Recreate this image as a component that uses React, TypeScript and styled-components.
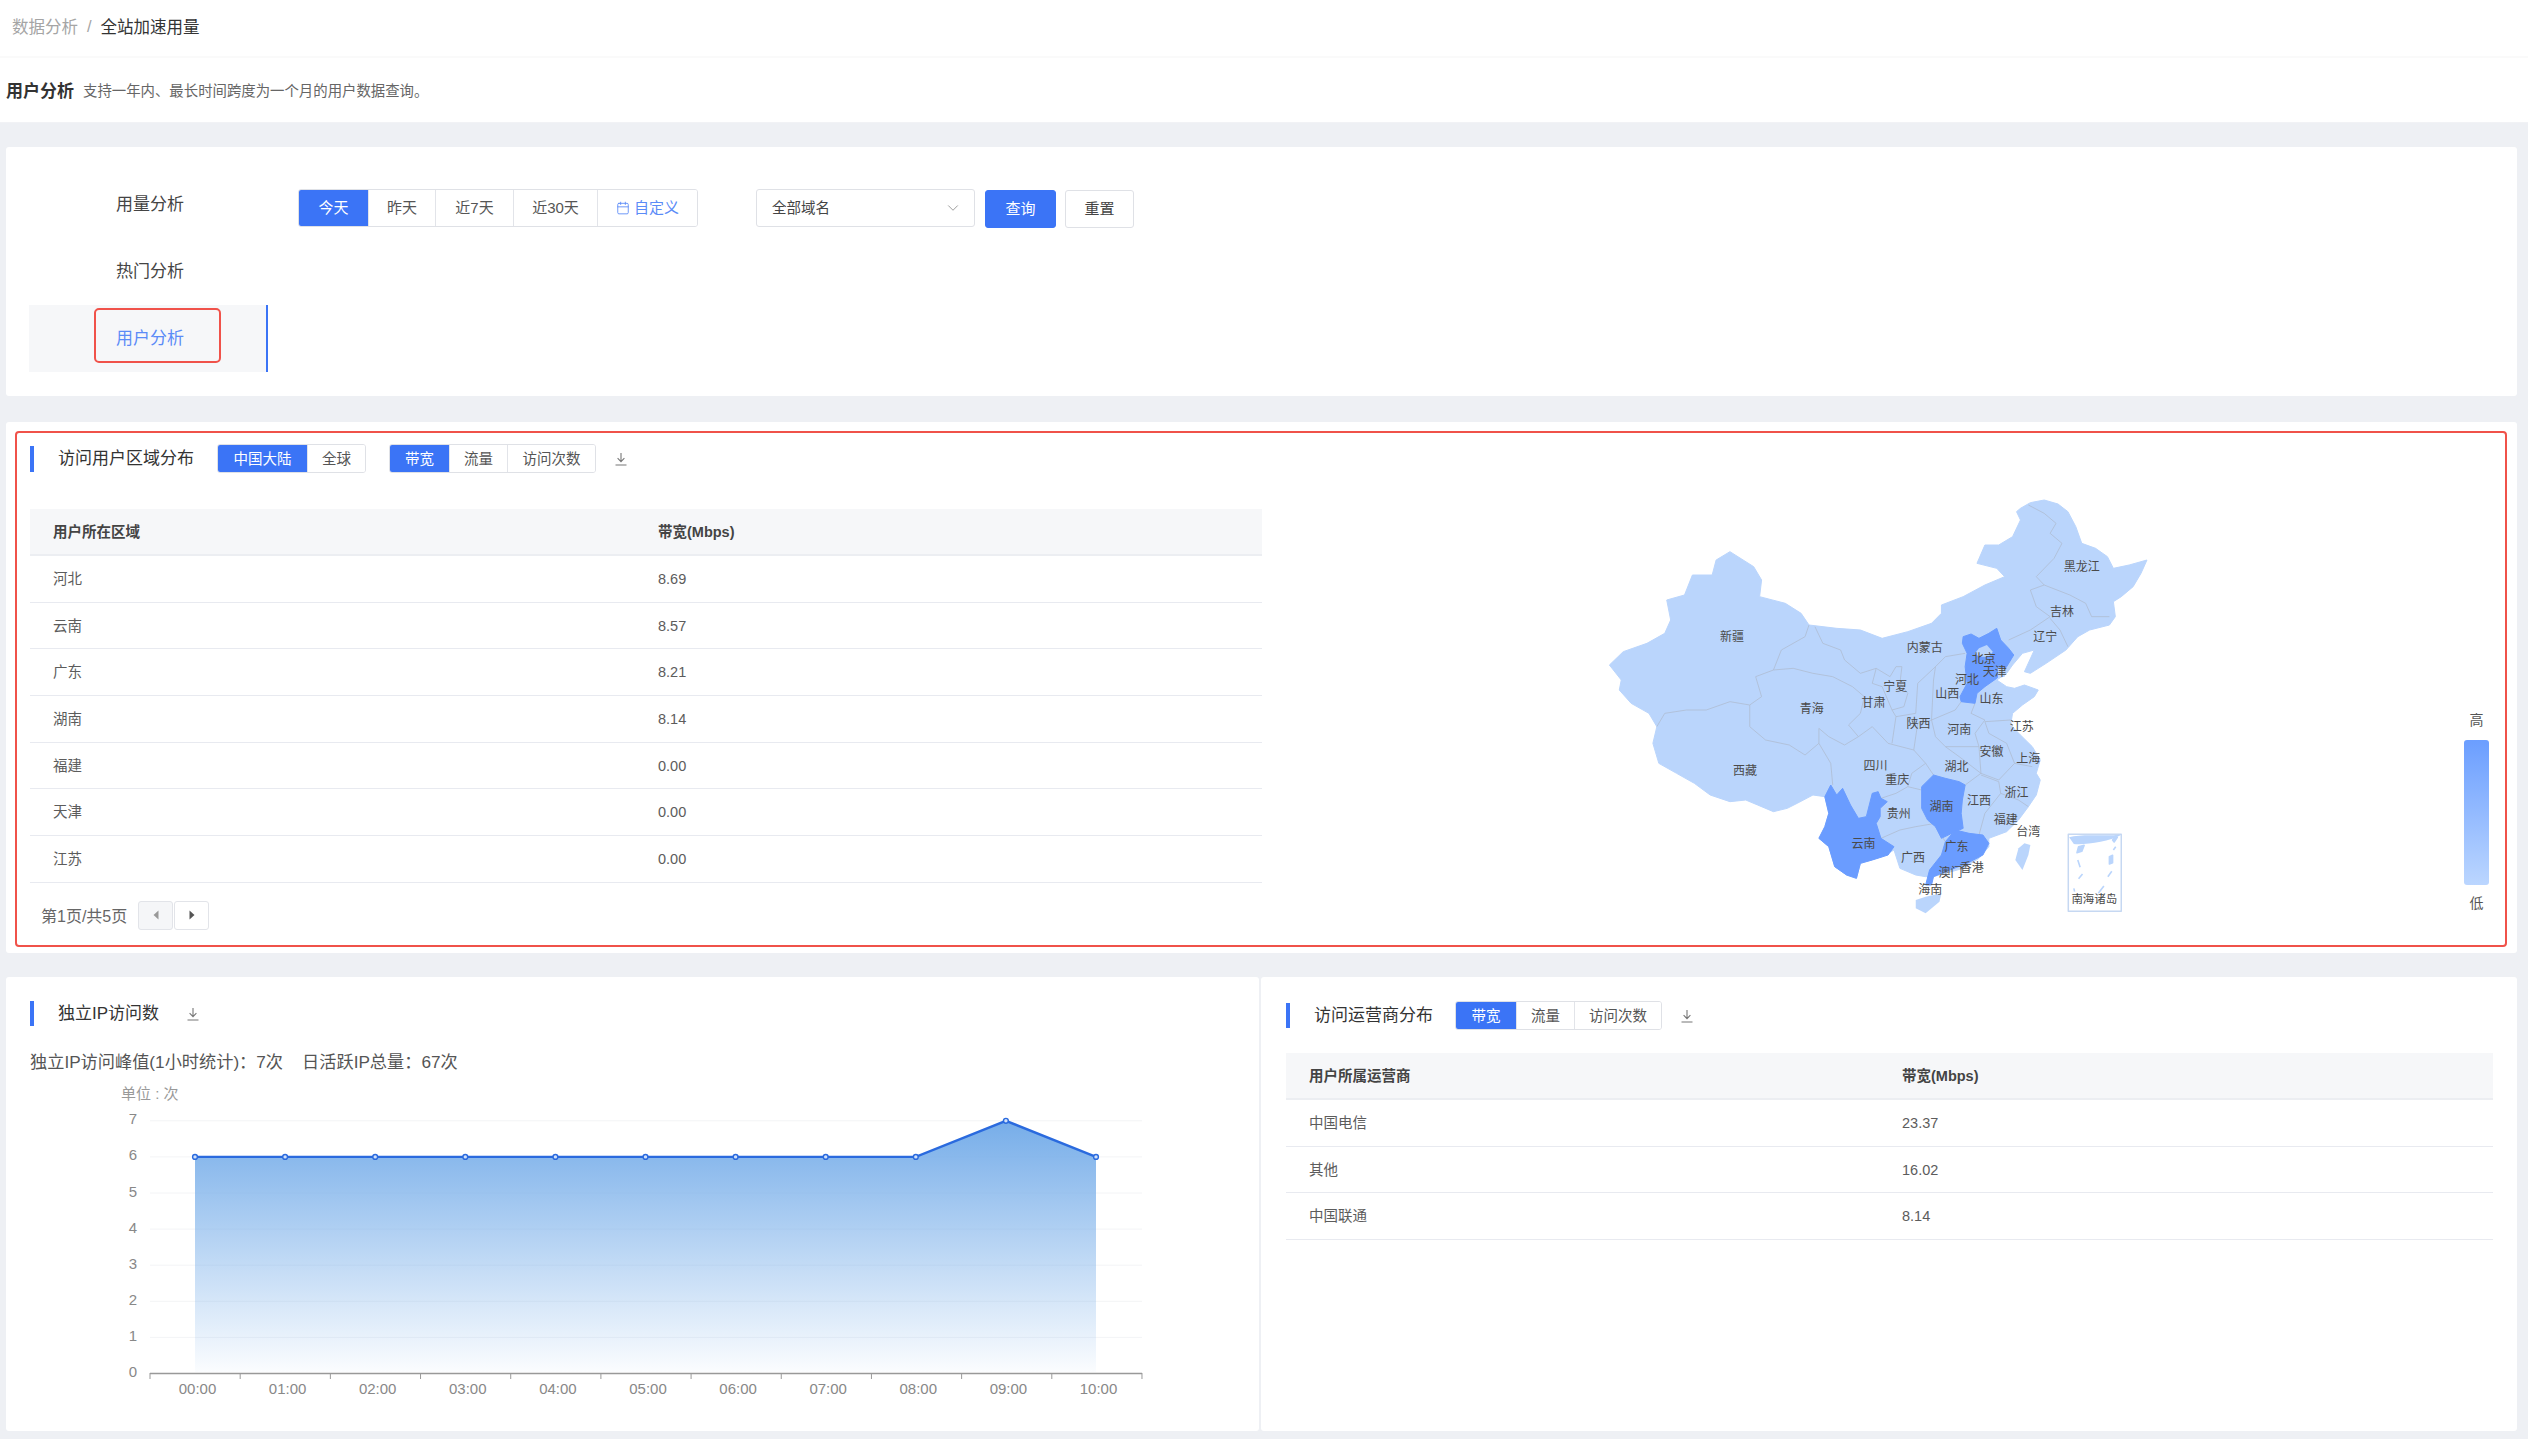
import React from "react";
import styled, { createGlobalStyle } from "styled-components";
import { Calendar, ChevronDown } from "lucide-react";

const Global = createGlobalStyle`
  html, body { margin: 0; padding: 0; background: #eef0f4; }
  body { font-family: "Liberation Sans", "Noto Sans CJK SC", sans-serif; color: #333; }
  * { box-sizing: border-box; }
`;

const BLUE = "#3b74f6";

const Page = styled.div`
  width: 2528px;
  height: 1439px;
  overflow: hidden;
  display: flex;
  flex-direction: column;
`;
const Breadcrumb = styled.div`
  height: 58px;
  padding: 0 0 4px 12px;
  background: #fff;
  display: flex;
  align-items: center;
  gap: 9px;
  font-size: 16.5px;
  border-bottom: 2px solid #fafafa;
`;
const Crumb = styled.span<{ $current?: boolean }>`
  color: ${(p) => (p.$current ? "#333" : "#a5a5a5")};
`;
const PageHeader = styled.div`
  height: 65px;
  background: #fff;
  padding: 0 0 1px 6px;
  display: flex;
  align-items: center;
  border-bottom: 1px solid #f1f2f5;
`;
const PageTitle = styled.span`
  font-size: 17px;
  font-weight: 700;
  color: #333;
  margin-right: 9px;
`;
const PageSub = styled.span`
  font-size: 14.4px;
  color: #666;
`;
const Main = styled.div`
  flex: 1;
  padding: 24px 11px 8px 6px;
  display: flex;
  flex-direction: column;
  gap: 25px;
`;
const Card = styled.div`
  background: #fff;
  border-radius: 3px;
`;
const TopCard = styled(Card)`
  height: 249px;
  margin-bottom: 1px;
  padding: 0 0 0 23px;
  display: flex;
`;
const Nav = styled.div`
  width: 239px;
  padding-top: 23.5px;
  display: flex;
  flex-direction: column;
`;
const NavItem = styled.div<{ $active?: boolean }>`
  position: relative;
  height: 67px;
  padding: 2px 0 0 87px;
  display: flex;
  align-items: center;
  line-height: 20px;
  font-size: 17px;
  color: ${(p) => (p.$active ? "#5b8bf7" : "#444")};
  background: ${(p) => (p.$active ? "#f6f7f9" : "transparent")};
  border-right: 2px solid ${(p) => (p.$active ? BLUE : "transparent")};
`;
const NavHighlight = styled.div`
  position: absolute;
  left: 65px;
  top: 3px;
  width: 127px;
  height: 55px;
  border: 2px solid #f0524a;
  border-radius: 5px;
`;
const Toolbar = styled.div`
  margin: 42px 0 0 30px;
  display: flex;
  align-items: flex-start;
`;
const Segmented = styled.div<{ $h: number }>`
  display: flex;
  height: ${(p) => p.$h}px;
  border: 1px solid #dfe1e6;
  border-radius: 3px;
  overflow: hidden;
  flex: none;
`;
const Segment = styled.div<{ $w: number; $on?: boolean; $link?: boolean; $size: number }>`
  width: ${(p) => p.$w}px;
  display: flex;
  align-items: center;
  justify-content: center;
  gap: 4px;
  line-height: 20px;
  font-size: ${(p) => p.$size}px;
  background: ${(p) => (p.$on ? BLUE : "#fff")};
  color: ${(p) => (p.$on ? "#fff" : p.$link ? "#5b8bf7" : "#555")};
  & + & { border-left: 1px solid #e2e4e9; }
`;
const Select = styled.div`
  margin-left: 58px;
  width: 219px;
  height: 38px;
  border: 1px solid #dfe1e6;
  border-radius: 3px;
  padding: 0 12px 0 15px;
  display: flex;
  align-items: center;
  justify-content: space-between;
  line-height: 20px;
  font-size: 14.5px;
  color: #444;
`;
const ActionButton = styled.div<{ $primary?: boolean; $w: number; $ml: number }>`
  margin: 1px 0 0 ${(p) => p.$ml}px;
  width: ${(p) => p.$w}px;
  height: 38px;
  border-radius: 3px;
  display: flex;
  align-items: center;
  justify-content: center;
  line-height: 20px;
  font-size: 15px;
  background: ${(p) => (p.$primary ? BLUE : "#fff")};
  color: ${(p) => (p.$primary ? "#fff" : "#444")};
  border: 1px solid ${(p) => (p.$primary ? BLUE : "#dfe1e6")};
`;
const RegionCard = styled(Card)`
  height: 531px;
  padding: 9px 10px 6px 9px;
`;
const RedFrame = styled.div`
  height: 100%;
  border: 2px solid #f0524a;
  border-radius: 4px;
  padding: 11px 0 0 13px;
  display: flex;
  align-items: flex-start;
`;
const TableColumn = styled.div`
  width: 1232px;
  flex: none;
`;
const SectionHead = styled.div<{ $mb: number; $h: number }>`
  height: ${(p) => p.$h}px;
  margin-bottom: ${(p) => p.$mb}px;
  display: flex;
  align-items: center;
`;
const SectionTitle = styled.div<{ $mr: number; $bar: number }>`
  height: ${(p) => p.$bar}px;
  border-left: 4px solid ${BLUE};
  padding-left: 24px;
  margin-right: ${(p) => p.$mr}px;
  display: flex;
  align-items: center;
  line-height: 20px;
  font-size: 17px;
  color: #333;
  white-space: nowrap;
`;
const Gap = styled.div<{ $w: number }>`
  width: ${(p) => p.$w}px;
  flex: none;
`;
const HeadRow = styled.div<{ $col: number }>`
  height: 47px;
  display: grid;
  grid-template-columns: ${(p) => p.$col}px 1fr;
  align-items: center;
  padding-left: 23px;
  background: #f6f7f9;
  border-bottom: 2px solid #eceef2;
  line-height: 20px;
  font-size: 14.5px;
  font-weight: 700;
  color: #444;
`;
const Row = styled.div<{ $col: number }>`
  height: 46.7px;
  display: grid;
  grid-template-columns: ${(p) => p.$col}px 1fr;
  align-items: center;
  padding-left: 23px;
  border-bottom: 1px solid #e8eaf0;
  line-height: 20px;
  font-size: 14.5px;
  color: #5c5c5c;
`;
const Pager = styled.div`
  margin-top: 18px;
  padding-left: 11px;
  height: 29px;
  display: flex;
  align-items: center;
  font-size: 16px;
  color: #666;
`;
const PageLabel = styled.span`
  width: 97px;
  flex: none;
  line-height: 20px;
  padding-top: 4px;
`;
const PageButton = styled.div<{ $disabled?: boolean }>`
  width: 35px;
  height: 29px;
  margin-right: 1px;
  border: 1px solid #e2e4e9;
  border-radius: 3px;
  background: ${(p) => (p.$disabled ? "#f5f6f8" : "#fff")};
  display: flex;
  align-items: center;
  justify-content: center;
`;
const MapWrap = styled.div`
  margin: 36px 0 0 298px;
  width: 620px;
  height: 460px;
  flex: none;
  svg { display: block; }
`;
const Legend = styled.div`
  margin: 266px 0 0 284px;
  width: 25px;
  display: flex;
  flex-direction: column;
  align-items: center;
  font-size: 14px;
  color: #555;
  line-height: 20px;
`;
const LegendBar = styled.div`
  width: 25px;
  height: 145px;
  margin: 10px 0 8px;
  border-radius: 3px;
  background: linear-gradient(180deg, #6b9eff, #bbd6ff);
`;
const BottomRow = styled.div`
  height: 454px;
  margin-top: -1px;
  display: flex;
  gap: 2px;
`;
const LeftCard = styled(Card)`
  width: 1253px;
  padding: 24px 0 0 24px;
`;
const RightCard = styled(Card)`
  flex: 1;
  padding: 24px 24px 0 25px;
`;
const StatLine = styled.div`
  height: 22px;
  line-height: 22px;
  font-size: 17.2px;
  color: #555;
  display: flex;
  gap: 19px;
  white-space: pre;
`;
const ChartBox = styled.div`
  margin-top: 7px;
  svg { display: block; }
`;

const DownloadIcon = () => (
  <svg width="14" height="14" viewBox="0 0 14 14" fill="none" stroke="#777" strokeWidth="1.1">
    <path d="M7 1v8.2M3.6 6.2 7 9.6l3.4-3.4M1.5 13h11" />
  </svg>
);
const Caret = ({ left, color }: { left?: boolean; color: string }) => (
  <svg width="6" height="10" viewBox="0 0 6 10">
    <path d={left ? "M5.5 0.5v9L0.5 5z" : "M0.5 0.5v9L5.5 5z"} fill={color} />
  </svg>
);

const SX = 1 / 2.53;
const SY = 1 / 3;
const LIGHT = "#bad5fc";
const DARK = "#6a9cff";
const pts = (a: number[]) => {
  const out: string[] = [];
  for (let i = 0; i < a.length; i += 2) out.push(`${a[i]},${a[i + 1]}`);
  return out.join(" ");
};

const mainland = [1165,85,1190,68,1225,60,1260,72,1285,95,1305,140,1320,190,1355,205,1385,230,1400,265,1440,255,1485,240,1470,280,1450,320,1420,350,1400,365,1405,410,1390,435,1340,450,1310,470,1280,510,1230,550,1190,580,1175,575,1200,510,1170,520,1145,555,1130,580,1105,600,1130,620,1150,625,1175,615,1210,630,1200,650,1170,675,1145,700,1140,735,1165,765,1195,800,1215,840,1205,880,1215,900,1205,945,1185,980,1160,1020,1130,1055,1085,1075,1085,1100,1060,1135,1020,1165,975,1180,945,1190,925,1190,900,1185,860,1165,845,1110,815,1130,760,1150,750,1195,725,1185,695,1160,680,1100,655,1075,670,1040,680,1000,670,950,640,945,600,970,575,985,540,995,500,975,470,960,430,965,380,945,340,910,295,880,250,850,235,790,245,740,225,700,180,670,150,630,155,600,125,555,160,515,220,490,265,460,280,420,270,360,315,345,335,285,385,285,395,240,430,215,490,260,510,300,505,350,570,370,610,400,630,435,700,445,760,450,815,475,880,455,940,430,965,400,965,375,1020,350,1075,315,1125,290,1105,265,1055,250,1075,195,1110,195,1145,170,1165,120,1155,95];
const taiwan = [1175,1090,1190,1095,1185,1125,1170,1170,1152,1140,1160,1105];
const hainan = [925,1250,965,1240,960,1265,925,1300,900,1285,900,1260];
const hebei = [1020,470,1040,462,1060,475,1085,460,1105,445,1115,480,1135,505,1148,525,1130,560,1105,595,1075,620,1055,640,1050,670,1015,665,1012,650,1030,610,1025,560,1030,520,1018,490];
const beijing = [1060,505,1080,495,1095,515,1085,530,1060,530,1050,520];
const tianjin = [1108,562,1128,570,1125,590,1108,594];
const yunnan = [685,915,700,945,715,925,735,975,755,1015,775,1010,790,940,805,935,812,955,828,965,810,985,810,1010,800,1030,812,1075,845,1100,830,1125,790,1140,760,1150,750,1195,725,1185,695,1160,680,1100,655,1075,670,1040,680,1000,670,950];
const hunan = [945,885,975,895,1010,905,1025,915,1018,960,1015,1000,1020,1045,1000,1055,965,1075,950,1040,930,1020,915,985,915,920];
const guangdong = [1000,1050,1035,1060,1070,1065,1085,1090,1070,1125,1030,1150,975,1175,945,1190,940,1215,925,1215,935,1170,965,1125,975,1085];
const borders = [
  [630,435,620,470,560,510,540,570,495,590,510,650,480,675,430,665,370,690,320,690,265,700,245,740],
  [645,440,665,490,710,510,720,540,760,580,800,565,790,610,815,620,840,690,870,680,880,640,860,610,865,560,850,560,835,590,800,565],
  [540,570,590,565,640,580,690,590,740,620,770,650,760,700,730,735,755,770,720,795,680,770,655,745,655,790,620,825,580,795,520,780,480,740,480,675],
  [655,790,685,850,690,915],
  [755,770,790,740,830,790,895,810,925,850,890,880,880,920,850,940,812,955],
  [840,690,850,710,840,790],
  [850,710,900,700,905,610,950,560,975,530,1025,520],
  [950,560,945,600,940,720,905,730,895,810],
  [1015,665,1000,690,940,720,950,770,975,800,1060,800,1050,760,1075,720,1040,700,1050,670],
  [1075,725,1140,720],
  [1075,725,1085,760,1130,790,1150,850,1195,860],
  [1060,800,1065,880,1110,900,1150,850],
  [975,800,1010,830,1065,880,1025,915],
  [925,850,945,885],
  [1065,885,1110,905,1115,940,1075,1000,1060,1065],
  [1115,940,1160,960,1185,980],
  [880,920,915,930],
  [812,1075,860,1050,900,1040,950,1030],
  [975,1085,950,1040],
  [1190,330,1225,315,1205,290,1250,235,1270,190,1250,170,1240,160,1255,130,1225,100,1185,75],
  [1225,315,1290,345,1330,370,1345,410,1390,410],
  [1190,330,1205,380,1240,410,1190,450,1135,480],
  [1240,415,1265,450,1285,500],
];
const labels: [string, number, number][] = [
  ["黑龙江",1320,262],["吉林",1270,395],["辽宁",1228,470],["内蒙古",923,505],["北京",1072,537],["天津",1100,575],["河北",1030,600],["山西",980,642],["山东",1092,657],["宁夏",848,622],["甘肃",793,670],["青海",637,687],["新疆",435,470],["西藏",468,873],["陕西",907,733],["河南",1010,750],["江苏",1168,742],["安徽",1092,817],["上海",1185,838],["湖北",1003,862],["四川",798,858],["重庆",853,900],["浙江",1155,940],["江西",1060,962],["湖南",965,980],["贵州",857,1003],["福建",1128,1020],["台湾",1185,1057],["云南",768,1092],["广东",1003,1100],["广西",893,1135],["香港",1042,1163],["澳门",988,1178],["海南",937,1230],["南海诸岛",1352,1258],
];

const ChinaMap = () => (
  <svg width="620" height="460" viewBox="0 0 620 460">
    <g transform={`scale(${SX} ${SY})`} strokeLinejoin="round">
      <polygon points={pts(mainland)} fill={LIGHT} stroke={LIGHT} strokeWidth="1" vectorEffect="non-scaling-stroke" />
      <polygon points={pts(taiwan)} fill={LIGHT} />
      <polygon points={pts(hainan)} fill={LIGHT} />
      {borders.map((b, i) => (
        <polyline key={i} points={pts(b)} fill="none" stroke="#aebdd2" strokeWidth="0.8" vectorEffect="non-scaling-stroke" />
      ))}
      <polygon points={pts(hebei)} fill={DARK} stroke={DARK} strokeWidth="1" vectorEffect="non-scaling-stroke" />
      <polygon points={pts(beijing)} fill={LIGHT} />
      <polygon points={pts(tianjin)} fill={LIGHT} />
      <polygon points={pts(yunnan)} fill={DARK} stroke={DARK} strokeWidth="1" vectorEffect="non-scaling-stroke" />
      <polygon points={pts(hunan)} fill={DARK} stroke={DARK} strokeWidth="1" vectorEffect="non-scaling-stroke" />
      <polygon points={pts(guangdong)} fill={DARK} stroke={DARK} strokeWidth="1" vectorEffect="non-scaling-stroke" />
      <rect x="1286" y="1063" width="134" height="231" fill="#fff" stroke="#c6d8f2" strokeWidth="1.5" vectorEffect="non-scaling-stroke" />
      <path d="M1288 1072C1320 1060 1380 1070 1418 1064V1066C1390 1085 1330 1095 1300 1092Z" fill={LIGHT} />
      <path d="M1312 1100l14-4-6 18-12 4zM1398 1080l8-12 4 4-8 14zM1390 1130l8-4v22l-8 4zM1310 1140l6 22M1312 1196l10-14M1386 1190l10-16M1300 1225l2 10M1362 1240l14-22M1400 1110l6-10" fill={LIGHT} stroke={LIGHT} strokeWidth="1.6" vectorEffect="non-scaling-stroke" />
    </g>
    {labels.map(([t, x, y]) => (
      <text key={t} x={x * SX} y={y * SY} textAnchor="middle" dominantBaseline="central" fontSize={t === "南海诸岛" ? 11.5 : 12} fill="#4a4a4a">
        {t}
      </text>
    ))}
  </svg>
);

const X0 = 195, DX = 90.1;
const yOf = (v: number) => 1373.5 - v * 36.1;
const values = [6, 6, 6, 6, 6, 6, 6, 6, 6, 7, 6];
const hours = ["00:00","01:00","02:00","03:00","04:00","05:00","06:00","07:00","08:00","09:00","10:00"];
const linePts = values.map((v, i) => `${X0 + i * DX},${yOf(v)}`).join(" ");

const IpChart = () => (
  <svg width="1200" height="330" viewBox="30 1080 1200 330">
    <defs>
      <linearGradient id="area" x1="0" y1="0" x2="0" y2="1">
        <stop offset="0" stopColor="#76ade9" />
        <stop offset="1" stopColor="#76ade9" stopOpacity="0.03" />
      </linearGradient>
    </defs>
    <text x="121" y="1093" fontSize="15" fill="#999" dominantBaseline="central">单位 : 次</text>
    {[1, 2, 3, 4, 5, 6, 7].map((v) => (
      <line key={v} x1="150" x2="1142" y1={yOf(v)} y2={yOf(v)} stroke="#f3f4f6" strokeWidth="1" />
    ))}
    {[0, 1, 2, 3, 4, 5, 6, 7].map((v) => (
      <text key={v} x="137" y={yOf(v) - 2} textAnchor="end" dominantBaseline="central" fontSize="15" fill="#888">{v}</text>
    ))}
    <polygon points={`${X0},1372 ${linePts} ${X0 + 10 * DX},1372`} fill="url(#area)" />
    <polyline points={linePts} fill="none" stroke="#2a6ade" strokeWidth="2.4" />
    {values.map((v, i) => (
      <circle key={i} cx={X0 + i * DX} cy={yOf(v)} r="2.4" fill="#cfe0fa" stroke="#2a6ade" strokeWidth="1.4" />
    ))}
    <line x1="150" x2="1142" y1="1373.5" y2="1373.5" stroke="#999" strokeWidth="1.4" />
    {Array.from({ length: 12 }, (_, i) => (
      <line key={i} x1={150 + i * 90.18} x2={150 + i * 90.18} y1="1373" y2="1379" stroke="#999" strokeWidth="1" />
    ))}
    {hours.map((h, i) => (
      <text key={h} x={197.5 + i * 90.1} y="1388" textAnchor="middle" dominantBaseline="central" fontSize="15" fill="#888">{h}</text>
    ))}
  </svg>
);

const regions = [["河北","8.69"],["云南","8.57"],["广东","8.21"],["湖南","8.14"],["福建","0.00"],["天津","0.00"],["江苏","0.00"]];
const carriers = [["中国电信","23.37"],["其他","16.02"],["中国联通","8.14"]];

const Metric = ({ widths }: { widths: number[] }) => (
  <Segmented $h={29}>
    <Segment $w={widths[0]} $on $size={14.5}>带宽</Segment>
    <Segment $w={widths[1]} $size={14.5}>流量</Segment>
    <Segment $w={widths[2]} $size={14.5}>访问次数</Segment>
  </Segmented>
);

export default function App() {
  return (
    <Page>
      <Global />
      <Breadcrumb>
        <Crumb>数据分析</Crumb>
        <Crumb>/</Crumb>
        <Crumb $current>全站加速用量</Crumb>
      </Breadcrumb>
      <PageHeader>
        <PageTitle>用户分析</PageTitle>
        <PageSub>支持一年内、最长时间跨度为一个月的用户数据查询。</PageSub>
      </PageHeader>
      <Main>
        <TopCard>
          <Nav>
            <NavItem>用量分析</NavItem>
            <NavItem>热门分析</NavItem>
            <NavItem $active>
              用户分析
              <NavHighlight />
            </NavItem>
          </Nav>
          <Toolbar>
            <Segmented $h={38}>
              <Segment $w={69} $on $size={15}>今天</Segment>
              <Segment $w={67} $size={15}>昨天</Segment>
              <Segment $w={78} $size={15}>近7天</Segment>
              <Segment $w={84} $size={15}>近30天</Segment>
              <Segment $w={100} $link $size={15}>
                <Calendar size={14} strokeWidth={1.5} />
                自定义
              </Segment>
            </Segmented>
            <Select>
              全部域名
              <ChevronDown size={18} strokeWidth={1.1} color="#888" />
            </Select>
            <ActionButton $primary $w={71} $ml={10}>查询</ActionButton>
            <ActionButton $w={69} $ml={9}>重置</ActionButton>
          </Toolbar>
        </TopCard>
        <RegionCard>
          <RedFrame>
            <TableColumn>
              <SectionHead $h={29} $mb={36}>
                <SectionTitle $bar={26} $mr={23}>访问用户区域分布</SectionTitle>
                <Segmented $h={29}>
                  <Segment $w={89} $on $size={14.5}>中国大陆</Segment>
                  <Segment $w={58} $size={14.5}>全球</Segment>
                </Segmented>
                <Gap $w={23} />
                <Metric widths={[59, 58, 88]} />
                <Gap $w={18} />
                <DownloadIcon />
              </SectionHead>
              <HeadRow $col={605}>
                <span>用户所在区域</span>
                <span>带宽(Mbps)</span>
              </HeadRow>
              {regions.map(([a, b]) => (
                <Row key={a} $col={605}>
                  <span>{a}</span>
                  <span>{b}</span>
                </Row>
              ))}
              <Pager>
                <PageLabel>第1页/共5页</PageLabel>
                <PageButton $disabled><Caret left color="#999" /></PageButton>
                <PageButton><Caret color="#555" /></PageButton>
              </Pager>
            </TableColumn>
            <MapWrap>
              <ChinaMap />
            </MapWrap>
            <Legend>
              高
              <LegendBar />
              低
            </Legend>
          </RedFrame>
        </RegionCard>
        <BottomRow>
          <LeftCard>
            <SectionHead $h={25} $mb={25}>
              <SectionTitle $bar={25} $mr={27}>独立IP访问数</SectionTitle>
              <DownloadIcon />
            </SectionHead>
            <StatLine>
              <span>独立IP访问峰值(1小时统计)：7次</span>
              <span>日活跃IP总量：67次</span>
            </StatLine>
            <ChartBox>
              <IpChart />
            </ChartBox>
          </LeftCard>
          <RightCard>
            <SectionHead $h={29} $mb={23}>
              <SectionTitle $bar={25} $mr={22}>访问运营商分布</SectionTitle>
              <Metric widths={[60, 58, 87]} />
              <Gap $w={18} />
              <DownloadIcon />
            </SectionHead>
            <HeadRow $col={593}>
              <span>用户所属运营商</span>
              <span>带宽(Mbps)</span>
            </HeadRow>
            {carriers.map(([a, b]) => (
              <Row key={a} $col={593}>
                <span>{a}</span>
                <span>{b}</span>
              </Row>
            ))}
          </RightCard>
        </BottomRow>
      </Main>
    </Page>
  );
}
